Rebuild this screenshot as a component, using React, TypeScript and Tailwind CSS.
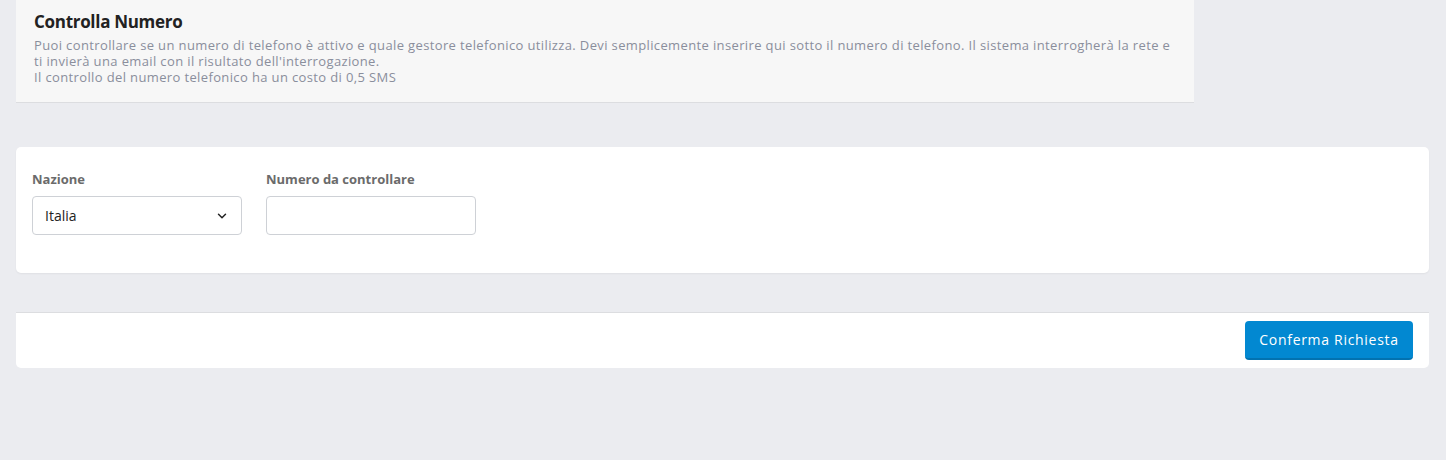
import { ChevronDown } from "lucide-react";

export default function App() {
    return (
        <div className="min-h-[460px] bg-[#ebecf0] pl-4 pr-[17px] pb-10 font-['Open_Sans',sans-serif]">
            <section className="w-[1178px] bg-[#f7f7f7] border-b border-[#dcdde0] px-[18px] pt-[10px] pb-[17px]">
                <h1 className="text-[17px] font-bold text-[#222] leading-[24px] tracking-[-0.3px]">Controlla Numero</h1>
                <p className="mt-[3px] text-[13px] leading-[16px] text-[#8a8e9c] tracking-[0.37px]">
                    Puoi controllare se un numero di telefono è attivo e quale gestore telefonico utilizza. Devi semplicemente inserire qui sotto il numero di telefono. Il sistema interrogherà la rete e ti invierà una email con il risultato dell'interrogazione.
                    <br />
                    Il controllo del numero telefonico ha un costo di 0,5 SMS
                </p>
            </section>

            <section className="mt-[44px] bg-white rounded-[5px] shadow-[0_1px_2px_rgba(0,0,0,0.05)] px-4 pt-[23px] pb-[38px]">
                <div className="flex gap-6">
                    <div className="w-[210px]">
                        <label className="block text-[13px] font-bold text-[#6b6b6b] leading-[18px] mb-[8px]">Nazione</label>
                        <div className="h-[39px] border border-[#ced1d6] rounded-[4px] flex items-center justify-between pl-[12px] pr-[12px]">
                            <span className="text-[14px] text-[#222]">Italia</span>
                            <ChevronDown size={14} strokeWidth={2.5} className="text-[#222]" />
                        </div>
                    </div>
                    <div className="w-[210px]">
                        <label className="block text-[13px] font-bold text-[#6b6b6b] leading-[18px] mb-[8px]">Numero da controllare</label>
                        <input type="text" className="w-full h-[39px] border border-[#ced1d6] rounded-[4px] px-3 text-[14px] focus:outline-none" />
                    </div>
                </div>
            </section>

            <section className="mt-[39px] bg-white border-t border-[#dcdde0] rounded-b-[5px] flex justify-end px-4 pt-[8px] pb-[8px]">
                <button className="h-[39px] w-[168px] bg-[#0288d1] border-b-2 border-[#0272b0] rounded-[4px] text-white text-[14px] tracking-[0.7px]">
                    Conferma Richiesta
                </button>
            </section>
        </div>
    );
}
